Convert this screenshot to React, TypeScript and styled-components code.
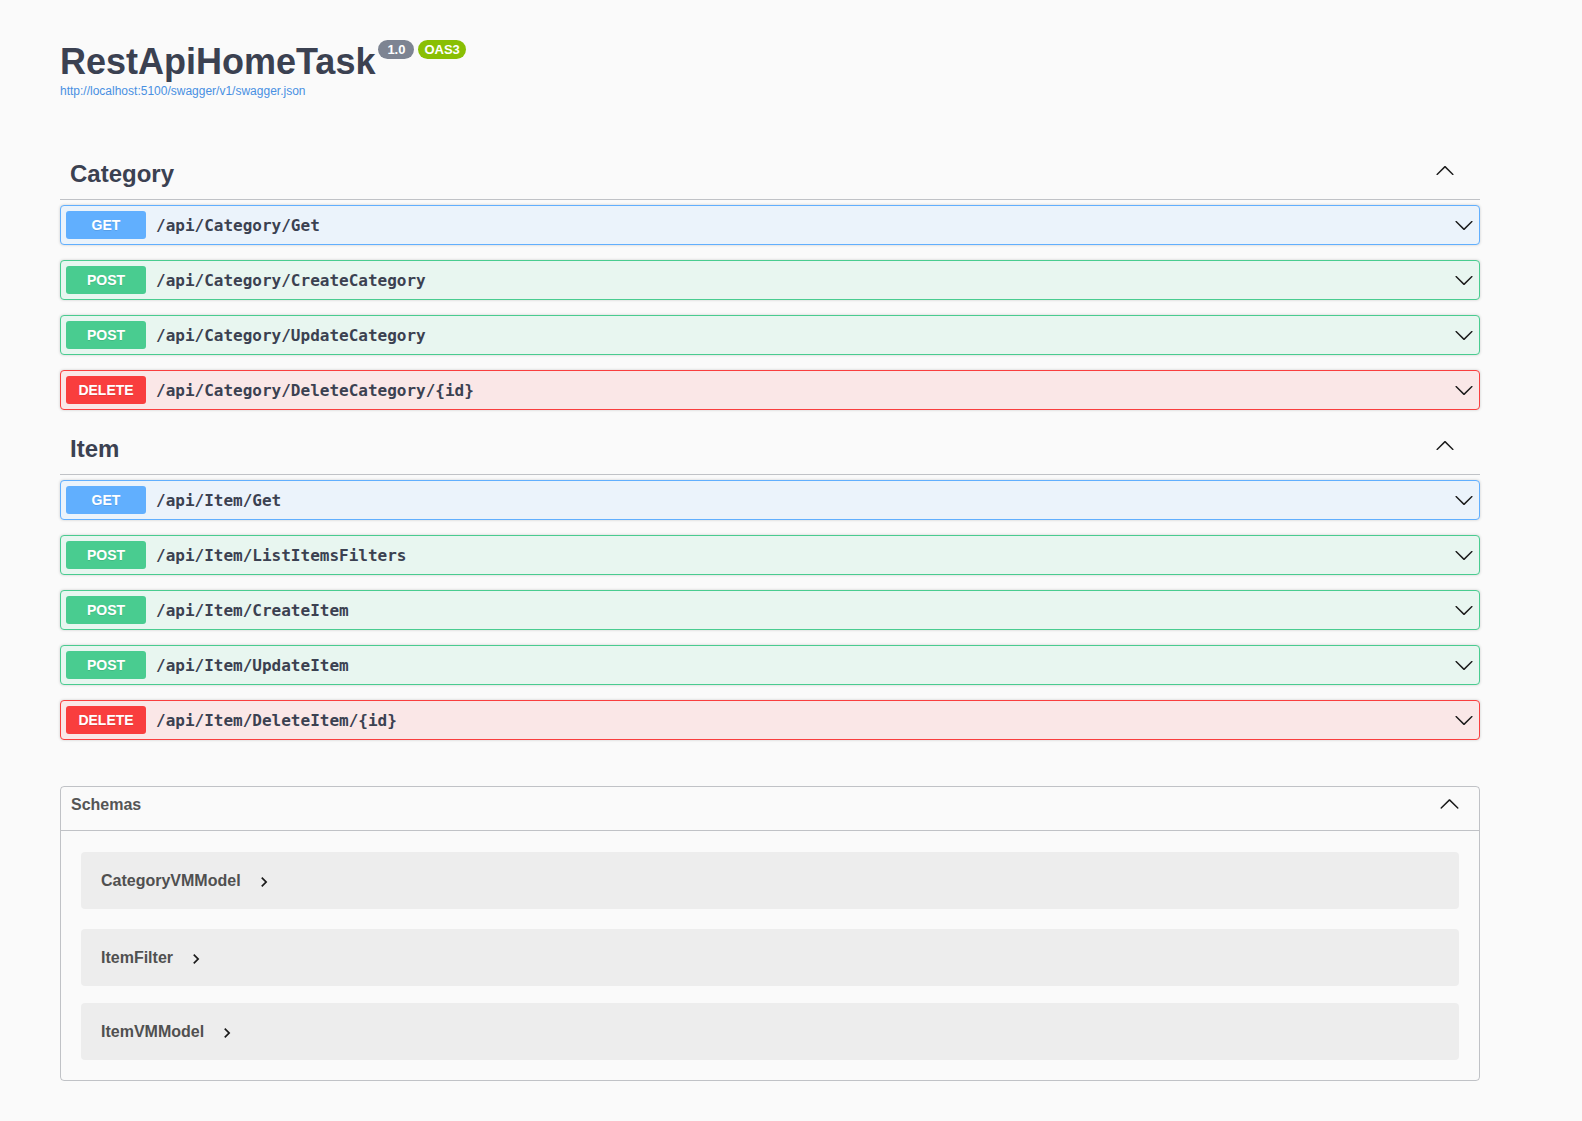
import styled, { createGlobalStyle } from "styled-components";

const GlobalStyle = createGlobalStyle`
  html, body {
    margin: 0;
    padding: 0;
    background: #fafafa;
  }
  body {
    font-family: "Liberation Sans", Arial, sans-serif;
    color: #3b4151;
  }
`;

const methodColors: Record<string, string> = {
  GET: "#61affe",
  POST: "#49cc90",
  DELETE: "#f93e3e",
};

const methodBg: Record<string, string> = {
  GET: "#ebf3fb",
  POST: "#e8f6f0",
  DELETE: "#fae7e7",
};

const Wrapper = styled.div`
  width: 1420px;
  margin-left: 60px;
  padding-bottom: 40px;
`;

const Info = styled.div`
  padding-top: 41px;
`;

const TitleRow = styled.div`
  display: flex;
  align-items: flex-start;
`;

const Title = styled.h2`
  margin: 0;
  font-size: 36px;
  line-height: 42px;
  font-weight: 700;
  color: #3b4151;
`;

const Badge = styled.span<{ $bg: string }>`
  display: inline-flex;
  align-items: center;
  justify-content: center;
  height: 19px;
  min-width: 36px;
  box-sizing: border-box;
  padding: 0 6px;
  margin: -1px 0 0 4px;
  border-radius: 57px;
  background: ${(p) => p.$bg};
  color: #fff;
  font-size: 13px;
  font-weight: 700;
  &:first-of-type {
    margin-left: 3px;
  }
`;

const SpecLink = styled.a`
  display: block;
  margin-top: 1px;
  font-size: 12px;
  line-height: 14px;
  color: #4990e2;
  text-decoration: none;
`;

const Tags = styled.div`
  margin-top: 52px;
`;

const TagHeading = styled.div`
  display: flex;
  align-items: flex-start;
  justify-content: space-between;
  padding: 10px 25px 11px 10px;
  border-bottom: 1px solid rgba(59, 65, 81, 0.3);
  margin-bottom: 5px;
`;

const TagName = styled.h3`
  margin: 0;
  font-size: 24px;
  line-height: 28px;
  font-weight: 700;
  color: #3b4151;
`;

const TagToggle = styled.span`
  display: flex;
  margin-top: 1px;
`;

const Opblock = styled.div<{ $method: string }>`
  display: flex;
  align-items: center;
  height: 40px;
  box-sizing: border-box;
  padding: 0 5px;
  margin-bottom: 15px;
  border: 1px solid ${(p) => methodColors[p.$method]};
  border-radius: 4px;
  background: ${(p) => methodBg[p.$method]};
  box-shadow: 0 0 3px rgba(0, 0, 0, 0.19);
`;

const Method = styled.span<{ $method: string }>`
  display: flex;
  align-items: center;
  justify-content: center;
  min-width: 80px;
  height: 28px;
  border-radius: 3px;
  background: ${(p) => methodColors[p.$method]};
  color: #fff;
  font-size: 14px;
  font-weight: 700;
  text-shadow: 0 1px 0 rgba(0, 0, 0, 0.1);
`;

const Path = styled.span`
  flex: 1;
  padding: 0 10px;
  font-family: "DejaVu Sans Mono", monospace;
  font-size: 16px;
  font-weight: 700;
  color: #3b4151;
`;

const Models = styled.section`
  margin-top: 46px;
  border: 1px solid rgba(59, 65, 81, 0.3);
  border-radius: 4px;
`;

const ModelsHeading = styled.div`
  display: flex;
  align-items: center;
  justify-content: space-between;
  height: 44px;
  box-sizing: border-box;
  padding: 0 19px 8px 10px;
  border-bottom: 1px solid rgba(59, 65, 81, 0.3);
`;

const ModelsTitle = styled.h4`
  margin: 0;
  font-size: 16px;
  font-weight: 700;
  color: #555;
`;

const ModelList = styled.div`
  padding: 21px 20px 20px;
`;

const ModelBox = styled.div`
  display: flex;
  align-items: center;
  height: 57px;
  padding: 0 20px;
  margin-bottom: 17px;
  border-radius: 4px;
  background: rgba(0, 0, 0, 0.05);
  &:first-child {
    margin-bottom: 20px;
  }
  &:last-child {
    margin-bottom: 0;
  }
`;

const ModelTitle = styled.span`
  font-size: 16px;
  font-weight: 700;
  color: #505050;
`;

const ModelToggle = styled.span`
  display: flex;
  margin: 3px 0 0 13px;
`;

const Chevron = ({ up, size = 20 }: { up?: boolean; size?: number }) => (
  <svg
    width={size}
    height={size}
    viewBox="0 0 20 20"
    style={up ? { transform: "rotate(180deg)" } : undefined}
  >
    <path
      fill="#1b1b1b"
      d="M17.418 6.109c.272-.268.709-.268.979 0s.271.701 0 .969l-7.908 7.83c-.27.268-.707.268-.979 0l-7.908-7.83c-.27-.268-.27-.701 0-.969.271-.268.709-.268.979 0L10 13.25l7.418-7.141z"
    />
  </svg>
);

const SmallArrow = () => (
  <svg width="20" height="20" viewBox="0 0 24 24">
    <path fill="#1b1b1b" d="M10 6 8.59 7.41 13.17 12l-4.58 4.59L10 18l6-6z" />
  </svg>
);

const tags = [
  {
    name: "Category",
    ops: [
      { method: "GET", path: "/api/Category/Get" },
      { method: "POST", path: "/api/Category/CreateCategory" },
      { method: "POST", path: "/api/Category/UpdateCategory" },
      { method: "DELETE", path: "/api/Category/DeleteCategory/{id}" },
    ],
  },
  {
    name: "Item",
    ops: [
      { method: "GET", path: "/api/Item/Get" },
      { method: "POST", path: "/api/Item/ListItemsFilters" },
      { method: "POST", path: "/api/Item/CreateItem" },
      { method: "POST", path: "/api/Item/UpdateItem" },
      { method: "DELETE", path: "/api/Item/DeleteItem/{id}" },
    ],
  },
];

const schemas = ["CategoryVMModel", "ItemFilter", "ItemVMModel"];

const App = () => {
  return (
    <>
      <GlobalStyle />
      <Wrapper>
        <Info>
          <TitleRow>
            <Title>RestApiHomeTask</Title>
            <Badge $bg="#7d8492">1.0</Badge>
            <Badge $bg="#89bf04">OAS3</Badge>
          </TitleRow>
          <SpecLink href="#">http://localhost:5100/swagger/v1/swagger.json</SpecLink>
        </Info>

        <Tags>
          {tags.map((tag) => (
            <div key={tag.name}>
              <TagHeading>
                <TagName>{tag.name}</TagName>
                <TagToggle>
                  <Chevron up />
                </TagToggle>
              </TagHeading>
              {tag.ops.map((op) => (
                <Opblock key={op.path} $method={op.method}>
                  <Method $method={op.method}>{op.method}</Method>
                  <Path>{op.path}</Path>
                  <Chevron />
                </Opblock>
              ))}
            </div>
          ))}
        </Tags>

        <Models>
          <ModelsHeading>
            <ModelsTitle>Schemas</ModelsTitle>
            <Chevron up size={21} />
          </ModelsHeading>
          <ModelList>
            {schemas.map((s) => (
              <ModelBox key={s}>
                <ModelTitle>{s}</ModelTitle>
                <ModelToggle>
                  <SmallArrow />
                </ModelToggle>
              </ModelBox>
            ))}
          </ModelList>
        </Models>
      </Wrapper>
    </>
  );
};

export default App;
